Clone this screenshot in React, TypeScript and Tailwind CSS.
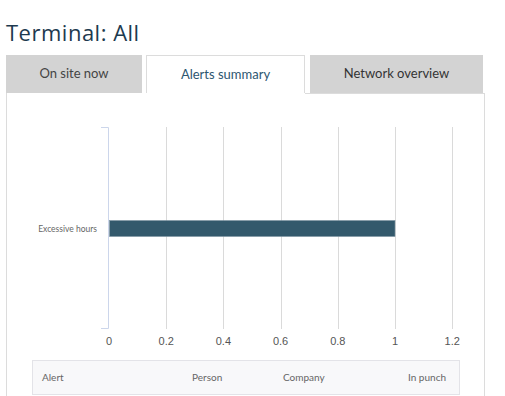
import React from "react";

const TICKS = [0, 0.2, 0.4, 0.6, 0.8, 1, 1.2];
const X0 = 109;
const STEP = 57.2;

function AlertsChart() {
  return (
    <svg width="477" height="266" viewBox="0 0 477 266" className="block">
      <g transform="translate(-7,-94)">
        {TICKS.slice(1).map((t, i) => {
          const x = Math.round(X0 + STEP * (i + 1)) + 0.5;
          return <line key={t} x1={x} x2={x} y1={127} y2={329} stroke="#dadada" strokeWidth="1" />;
        })}
        <path d="M101 127.5 H108.5 V328.5 H101" fill="none" stroke="#ccd6eb" strokeWidth="1" />
        <rect x="109.5" y="220.5" width="285.5" height="16" fill="#33596c" stroke="#7f97a4" strokeWidth="0.6" />
        <text x="97" y="232" textAnchor="end" fontSize="8.5" fill="#666" fontFamily="Lato, sans-serif">
          Excessive hours
        </text>
        {TICKS.map((t, i) => (
          <text
            key={t}
            x={X0 + STEP * i}
            y={345}
            textAnchor="middle"
            fontSize="11"
            fill="#555"
            fontFamily="'Liberation Sans', Arial, sans-serif"
          >
            {t}
          </text>
        ))}
      </g>
    </svg>
  );
}

export default function App() {
  return (
    <div className="w-[505px] h-[396px] overflow-hidden bg-white font-['Lato','Open_Sans',sans-serif]">
      <h1 className="pl-[6px] pt-[18px] h-[46px] text-[22px] leading-[28px] tracking-[0.5px] text-[#1d3a4f] font-normal font-['Open_Sans',sans-serif]">
        Terminal: All
      </h1>
      <div className="mt-[9px] ml-[6px] flex items-end h-[38px]">
        <div className="w-[136px] h-[38px] bg-[#d3d3d3] flex items-center justify-center text-[13px] text-[#444]">
          On site now
        </div>
        <div className="ml-[4px] w-[159px] h-[38px] bg-white border border-b-0 border-[#dcdcdc] flex items-center justify-center text-[13px] text-[#2d5670]">
          Alerts summary
        </div>
        <div className="ml-[5px] w-[173px] h-[38px] bg-[#d3d3d3] flex items-center justify-center text-[13px] text-[#333]">
          Network overview
        </div>
      </div>
      <div className="ml-[6px] w-[479px] h-[310px] border-l border-r border-[#dcdcdc] relative">
        <div className="absolute top-0 left-[298px] right-0 border-t border-[#dcdcdc]" />
        <div className="pt-[1px]">
          <AlertsChart />
        </div>
        <div className="ml-[25px] w-[428px] h-[35px] bg-[#f8f8fa] border border-[#e3e3e8] flex items-center text-[10px] text-[#666]">
          <div className="pl-[9px] w-[159px]">Alert</div>
          <div className="w-[91px]">Person</div>
          <div className="w-[125px]">Company</div>
          <div>In punch</div>
        </div>
      </div>
    </div>
  );
}
